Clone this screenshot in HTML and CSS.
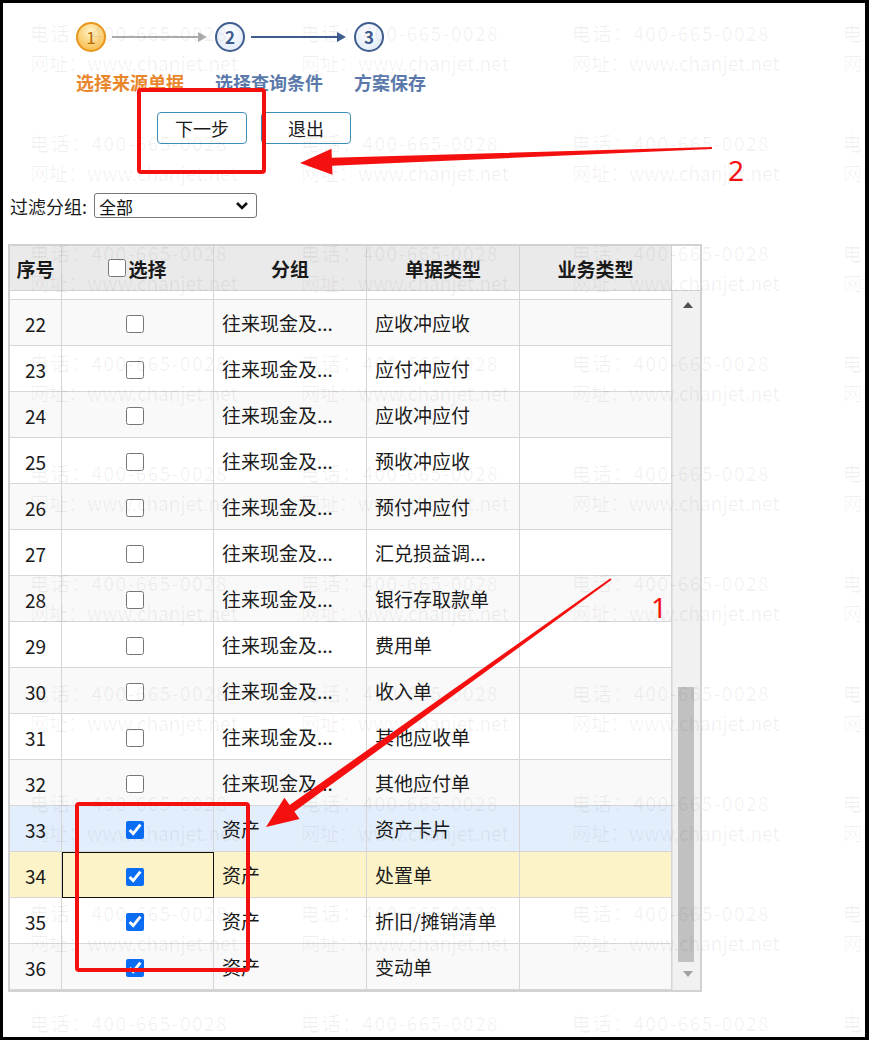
FILE: index.html
```html
<!DOCTYPE html>
<html>
<head>
    <meta charset="utf-8">
    <title>选择来源单据</title>
    <link rel="stylesheet" href="styles.css">
</head>
<body>
    <div class="frame">
        <div class="steps">
            <div class="step">
                <div class="step-top">
                    <span class="circle circle-active">1</span>
                    <svg class="arrow" width="95" height="12" viewBox="0 0 95 12">
                        <line x1="0" y1="6" x2="88" y2="6" stroke="#acacac" stroke-width="2"/>
                        <polygon points="86,1 95,6 86,11" fill="#acacac"/>
                    </svg>
                </div>
                <div class="step-label label-active">选择来源单据</div>
            </div>
            <div class="step">
                <div class="step-top">
                    <span class="circle">2</span>
                    <svg class="arrow" width="95" height="12" viewBox="0 0 95 12">
                        <line x1="0" y1="6" x2="88" y2="6" stroke="#3e5d8f" stroke-width="2"/>
                        <polygon points="86,1 95,6 86,11" fill="#3e5d8f"/>
                    </svg>
                </div>
                <div class="step-label">选择查询条件</div>
            </div>
            <div class="step">
                <div class="step-top">
                    <span class="circle">3</span>
                </div>
                <div class="step-label">方案保存</div>
            </div>
        </div>

        <div class="actions">
            <button class="btn">下一步</button>
            <button class="btn">退出</button>
        </div>

        <div class="filter">
            <label for="group">过滤分组:</label>
            <span class="select-wrap">
                <select id="group"><option>全部</option></select>
                <svg class="chevron" width="14" height="10" viewBox="0 0 14 10">
                    <polyline points="2,2 7,7 12,2" fill="none" stroke="#111" stroke-width="2.6"/>
                </svg>
            </span>
        </div>

        <div class="grid">
            <div class="grid-head">
                <div class="hcell">序号</div>
                <div class="hcell"><input type="checkbox" class="chk chk-head">选择</div>
                <div class="hcell">分组</div>
                <div class="hcell">单据类型</div>
                <div class="hcell">业务类型</div>
                <div class="hcell corner"></div>
            </div>
            <div class="grid-body">
                <div class="rows">
                    <div class="row partial"><div></div><div></div><div></div><div></div><div></div></div>
                    <div class="row even"><div class="num">22</div><div class="sel"><input type="checkbox" class="chk"></div><div class="txt">往来现金及...</div><div class="txt">应收冲应收</div><div></div></div>
                    <div class="row"><div class="num">23</div><div class="sel"><input type="checkbox" class="chk"></div><div class="txt">往来现金及...</div><div class="txt">应付冲应付</div><div></div></div>
                    <div class="row even"><div class="num">24</div><div class="sel"><input type="checkbox" class="chk"></div><div class="txt">往来现金及...</div><div class="txt">应收冲应付</div><div></div></div>
                    <div class="row"><div class="num">25</div><div class="sel"><input type="checkbox" class="chk"></div><div class="txt">往来现金及...</div><div class="txt">预收冲应收</div><div></div></div>
                    <div class="row even"><div class="num">26</div><div class="sel"><input type="checkbox" class="chk"></div><div class="txt">往来现金及...</div><div class="txt">预付冲应付</div><div></div></div>
                    <div class="row"><div class="num">27</div><div class="sel"><input type="checkbox" class="chk"></div><div class="txt">往来现金及...</div><div class="txt">汇兑损益调...</div><div></div></div>
                    <div class="row even"><div class="num">28</div><div class="sel"><input type="checkbox" class="chk"></div><div class="txt">往来现金及...</div><div class="txt">银行存取款单</div><div></div></div>
                    <div class="row"><div class="num">29</div><div class="sel"><input type="checkbox" class="chk"></div><div class="txt">往来现金及...</div><div class="txt">费用单</div><div></div></div>
                    <div class="row even"><div class="num">30</div><div class="sel"><input type="checkbox" class="chk"></div><div class="txt">往来现金及...</div><div class="txt">收入单</div><div></div></div>
                    <div class="row"><div class="num">31</div><div class="sel"><input type="checkbox" class="chk"></div><div class="txt">往来现金及...</div><div class="txt">其他应收单</div><div></div></div>
                    <div class="row even"><div class="num">32</div><div class="sel"><input type="checkbox" class="chk"></div><div class="txt">往来现金及...</div><div class="txt">其他应付单</div><div></div></div>
                    <div class="row hover"><div class="num">33</div><div class="sel"><input type="checkbox" class="chk" checked></div><div class="txt">资产</div><div class="txt">资产卡片</div><div></div></div>
                    <div class="row current"><div class="num">34</div><div class="sel focused"><input type="checkbox" class="chk" checked></div><div class="txt">资产</div><div class="txt">处置单</div><div></div></div>
                    <div class="row"><div class="num">35</div><div class="sel"><input type="checkbox" class="chk" checked></div><div class="txt">资产</div><div class="txt">折旧/摊销清单</div><div></div></div>
                    <div class="row even"><div class="num">36</div><div class="sel"><input type="checkbox" class="chk" checked></div><div class="txt">资产</div><div class="txt">变动单</div><div></div></div>
                </div>
                <div class="vscroll">
                    <span class="scroll-up"></span>
                    <span class="scroll-thumb"></span>
                    <span class="scroll-down"></span>
                </div>
            </div>
        </div>

        <div class="watermark" id="watermark"></div>

        <svg class="marks" width="869" height="1040" viewBox="0 0 869 1040">
            <rect x="139" y="90" width="125" height="82" rx="2" fill="none" stroke="#f51010" stroke-width="4"/>
            <polygon points="711.96,147.0 331.83,157.84 331.51,148.85 300,163 332.45,174.83 332.13,165.84 712.04,149.0" fill="#f51010"/>
            <text x="728" y="181" class="mark-num">2</text>
            <rect x="77" y="804" width="171" height="166" rx="2" fill="none" stroke="#f51010" stroke-width="4"/>
            <polygon points="610.42,578.19 289.65,805.07 284.39,797.76 266,827 299.57,818.88 294.31,811.57 611.58,579.81" fill="#f51010"/>
            <text x="651" y="618" class="mark-num">1</text>
        </svg>
    </div>

    <script>
        // tile the phone / site watermark over the page
        const wm = document.getElementById('watermark');
        for (let r = 0; r < 10; r++) {
            for (let c = 0; c < 4; c++) {
                const block = document.createElement('div');
                block.className = 'wm-block';
                block.style.left = (30 + c * 271) + 'px';
                block.style.top = (18 + r * 110) + 'px';
                block.innerHTML = '<div class="wm-tel">电话：400-665-0028</div><div>网址：www.chanjet.net</div>';
                wm.appendChild(block);
            }
        }
    </script>
</body>
</html>
```

FILE: styles.css
```css
body {
    margin: 0;
    font-family: "Noto Sans CJK SC", "Noto Sans", sans-serif;
    color: #1a1a1a;
    background-color: #fff;
}

.frame {
    position: relative;
    width: 869px;
    height: 1040px;
    box-sizing: border-box;
    border: 3px solid #000;
    border-right-width: 4px;
    overflow: hidden;
}

/* wizard steps */
.steps {
    display: grid;
    grid-template-columns: repeat(3, 139px);
    padding: 19px 0 0 73px;
}

.step-top {
    display: flex;
    align-items: center;
    height: 30px;
}

.circle {
    width: 30px;
    height: 30px;
    box-sizing: border-box;
    border-radius: 50%;
    border: 2.5px solid #3e5d8f;
    background: radial-gradient(circle at 50% 35%, #ffffff, #dde8f6);
    color: #3e5d8f;
    font-size: 17px;
    font-weight: bold;
    line-height: 25px;
    text-align: center;
    flex-shrink: 0;
}

.circle-active {
    border-color: #e8961c;
    background: radial-gradient(circle at 50% 30%, #fff3c8, #f6b338);
    color: #b56a00;
    font-weight: normal;
}

.arrow {
    margin: 0 8px 0 6px;
}

.step-label {
    margin-top: 18px;
    font-size: 18px;
    font-weight: bold;
    line-height: 24px;
    color: #5a79aa;
    white-space: nowrap;
}

.label-active {
    color: #e8862c;
}

/* buttons */
.actions {
    display: flex;
    gap: 14px;
    margin-top: 18px;
    padding-left: 154px;
}

.btn {
    width: 90px;
    height: 32px;
    box-sizing: border-box;
    border: 1.5px solid #3f8db6;
    border-radius: 4px;
    background: #fff;
    font-family: inherit;
    font-size: 18px;
    color: #1a1a1a;
    padding: 0;
    cursor: pointer;
}

/* filter */
.filter {
    display: flex;
    align-items: center;
    gap: 7px;
    margin-top: 49px;
    padding-left: 7px;
    font-size: 18px;
    height: 25px;
}

.select-wrap {
    position: relative;
    display: flex;
}

.filter select {
    width: 163px;
    height: 25px;
    font-family: inherit;
    font-size: 17px;
    padding: 0 4px;
    border: 1px solid #767676;
    border-radius: 3px;
    background: #fff;
    color: #111;
    appearance: none;
}

.chevron {
    position: absolute;
    right: 8px;
    top: 8px;
    pointer-events: none;
}

/* data grid */
.grid {
    margin: 26px 0 0 5px;
    width: 694px;
    box-sizing: border-box;
    border: 2px solid #d2d2d2;
    font-size: 19px;
}

.grid-head {
    display: grid;
    grid-template-columns: 52px 152px 153px 153px 152px 28px;
    height: 45px;
}

.hcell {
    display: flex;
    align-items: center;
    justify-content: center;
    background-color: #eaeaea;
    font-weight: bold;
    border-right: 1px solid #d2d2d2;
    border-bottom: 1px solid #d2d2d2;
}

.hcell.corner {
    background-color: #fff;
    border-right: none;
}

.grid-body {
    display: flex;
}

.rows {
    width: 662px;
}

.row {
    display: grid;
    grid-template-columns: 52px 152px 153px 153px 152px;
    height: 46px;
    background-color: #fff;
}

.row > div {
    display: flex;
    align-items: center;
    box-sizing: border-box;
    border-right: 1px solid #d6d6d6;
    border-bottom: 1px solid #d6d6d6;
    overflow: hidden;
    white-space: nowrap;
}

.row.partial {
    height: 9px;
}

.row.even {
    background-color: #f9f9f9;
}

.row.hover {
    background-color: #e3eefc;
}

.row.current {
    background-color: #fdf3c9;
}

.row > .num {
    justify-content: center;
    padding-top: 2px;
}

.row > .sel {
    justify-content: center;
    padding-right: 6px;
    padding-top: 3px;
}

.row > .sel.focused {
    border: 1px solid #111;
}

.row > .txt {
    padding-left: 8px;
}

.chk {
    width: 18px;
    height: 18px;
    margin: 0;
    accent-color: #0b6cf4;
}

.chk-head {
    margin-right: 2px;
}

.vscroll {
    position: relative;
    width: 28px;
    background-color: #f1f1f1;
    border-left: 1px solid #e2e2e2;
    box-sizing: border-box;
}

.scroll-up,
.scroll-down {
    position: absolute;
    left: 10px;
    width: 0;
    height: 0;
    border-left: 5px solid transparent;
    border-right: 5px solid transparent;
}

.scroll-up {
    top: 11px;
    border-bottom: 6px solid #505050;
}

.scroll-down {
    bottom: 13px;
    border-top: 6px solid #a3a3a3;
}

.scroll-thumb {
    position: absolute;
    left: 5px;
    width: 16px;
    top: 396px;
    height: 275px;
    background-color: #c1c1c1;
}

/* overlays */
.watermark {
    position: absolute;
    top: -3px;
    left: -3px;
    width: 869px;
    height: 1040px;
    pointer-events: none;
}

.wm-block {
    position: absolute;
    font-size: 19px;
    line-height: 30px;
    color: rgba(0, 0, 0, 0.06);
    white-space: nowrap;
}

.wm-tel {
    letter-spacing: 1.5px;
}

.marks {
    position: absolute;
    top: -3px;
    left: -3px;
    pointer-events: none;
}

.mark-num {
    font-family: "Noto Sans", sans-serif;
    font-size: 28px;
    fill: #f51010;
}
```
